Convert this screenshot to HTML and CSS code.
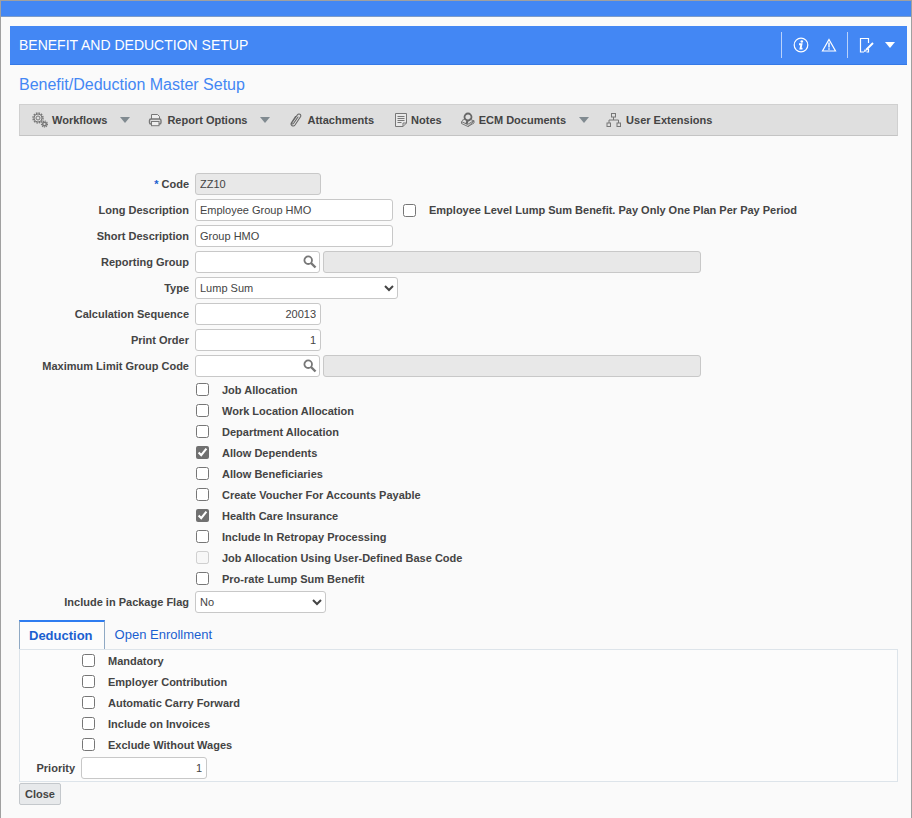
FILE: index.html
```html
<!DOCTYPE html>
<html lang="en">
<head>
    <meta charset="utf-8">
    <title>Benefit and Deduction Setup</title>
    <link rel="stylesheet" href="styles.css">
</head>
<body>
    <div class="top-bar"></div>
    <header class="page-header">
        <h1>BENEFIT AND DEDUCTION SETUP</h1>
        <div class="header-actions">
            <button type="button" class="icon-button" aria-label="Information">
                <svg width="16" height="16" viewBox="0 0 16 16" fill="none" stroke="#fff">
                    <circle cx="8" cy="8" r="6.8" stroke-width="1.2"/>
                    <circle cx="8.8" cy="4.5" r="1.3" fill="#fff" stroke="none"/>
                    <path d="M6 7.2h2.500l-1 4.400h2" stroke-width="1.900"/>
                </svg>
            </button>
            <button type="button" class="icon-button" aria-label="Warnings">
                <svg width="16" height="16" viewBox="0 0 16 16" fill="none" stroke="#fff">
                    <path d="M8 2.500L14.500 14H1.500z" stroke-width="1.200"/>
                    <path d="M8 5.500v5M8 11.300v1.500" stroke-width="1.400"/>
                </svg>
            </button>
            <button type="button" class="icon-button edit-button" aria-label="Edit">
                <svg width="16" height="16" viewBox="0 0 16 16" fill="none" stroke="#fff">
                    <path d="M9.500 6V1.500H1.500v13.500H5M9.500 12v3H7.500" stroke-width="1.200"/>
                    <path d="M14 6L7 13" stroke-width="2"/>
                    <path d="M4.800 15l.8-2.800 2 2z" fill="#fff" stroke="none"/>
                </svg>
                <span class="caret"></span>
            </button>
        </div>
    </header>

    <main>
        <h2>Benefit/Deduction Master Setup</h2>
        <nav class="toolbar">
            <button type="button">
                <svg width="16" height="16" viewBox="0 0 16 16" fill="none" stroke="#777">
                    <circle cx="6" cy="6" r="5" stroke-width="1.4" stroke-dasharray="1.6 1"/>
                    <circle cx="6" cy="6" r="4"/>
                    <circle cx="6" cy="6" r="2"/>
                    <circle cx="12.5" cy="12" r="3" stroke-width="1.2" stroke-dasharray="1.2 .8"/>
                    <circle cx="12.5" cy="12" r="1.8" stroke-width="1.4"/>
                </svg>
                Workflows
                <span class="caret"></span>
            </button>
            <button type="button">
                <svg width="16" height="16" viewBox="0 0 16 16" fill="none" stroke="#777">
                    <path d="M4.5 7V2.5h6l2 2V7" fill="#eee"/>
                    <rect x="2.5" y="7" width="11.5" height="5" rx="1.5" stroke-width="1.4"/>
                    <rect x="4.5" y="9.5" width="7.5" height="4.2" fill="#eee"/>
                </svg>
                Report Options
                <span class="caret"></span>
            </button>
            <button type="button">
                <svg width="16" height="16" viewBox="0 0 16 16" fill="none" stroke="#666" stroke-width="1.1" stroke-linecap="round">
                    <path d="M11 5L6.5 11.5c-.8 1.1-2.3.2-1.6-.9L10.3 3c1.5-2.1 4.5-.4 3.2 1.8L8 13c-1.5 2-4.8.5-3.7-2L8.5 4.5"/>
                </svg>
                Attachments
            </button>
            <button type="button">
                <svg width="16" height="16" viewBox="0 0 16 16" fill="none" stroke="#777">
                    <path d="M4.5 1.5h11v9.5l-3.5 3.5h-7.5z" fill="#e8e8e8"/>
                    <path d="M15.5 11H12v3.5M6.5 4.5h7M6.5 6.5h7M6.5 8.5h7M6.5 10.5h4"/>
                </svg>
                Notes
            </button>
            <button type="button">
                <svg width="16" height="16" viewBox="0 0 16 16" fill="none" stroke="#777">
                    <path d="M3 8.5l3-1.5M10.5 7L15 9l-6 5.5L2.5 11.5v-2l6 3L15 8.5v2.5l-6 3.5"/>
                    <circle cx="9" cy="5" r="3.5" stroke="#666" stroke-width="1.8"/>
                    <path d="M8.5 8.5L7.5 12" stroke="#666" stroke-width="2.2"/>
                </svg>
                ECM Documents
                <span class="caret"></span>
            </button>
            <button type="button">
                <svg width="16" height="16" viewBox="0 0 16 16" fill="none" stroke="#777">
                    <rect x="5.5" y="1.5" width="4" height="3.5"/>
                    <path d="M7.5 5v3M3 11V8h9.5v3"/>
                    <rect x="1" y="11" width="3.5" height="3.5"/>
                    <rect x="11" y="11" width="3.5" height="3.5"/>
                </svg>
                User Extensions
            </button>
        </nav>

        <form class="setup-form">
            <div class="row">
                <label for="code"><span class="required">*</span> Code</label>
                <input type="text" id="code" class="short" value="ZZ10" readonly>
            </div>
            <div class="row">
                <label for="longDesc">Long Description</label>
                <input type="text" id="longDesc" class="medium" value="Employee Group HMO">
                <div class="check">
                    <input type="checkbox" id="lumpSum">
                    <label for="lumpSum">Employee Level Lump Sum Benefit. Pay Only One Plan Per Pay Period</label>
                </div>
            </div>
            <div class="row">
                <label for="shortDesc">Short Description</label>
                <input type="text" id="shortDesc" class="medium" value="Group HMO">
            </div>
            <div class="row">
                <label for="reportGroup">Reporting Group</label>
                <div class="lookup">
                    <input type="text" id="reportGroup">
                    <button type="button" aria-label="Search reporting group">
                        <svg width="14" height="14" viewBox="0 0 14 14" fill="none" stroke="#777">
                            <circle cx="5.2" cy="5.2" r="3.8" stroke-width="1.8"/>
                            <path d="M8 8L12.500 12.500" stroke-width="2.400"/>
                        </svg>
                    </button>
                </div>
                <input type="text" class="description" aria-label="Reporting group description" readonly>
            </div>
            <div class="row">
                <label for="type">Type</label>
                <select id="type" class="type-select">
                    <option>Lump Sum</option>
                </select>
            </div>
            <div class="row">
                <label for="calcSequence">Calculation Sequence</label>
                <input type="text" id="calcSequence" class="short number" value="20013">
            </div>
            <div class="row">
                <label for="printOrder">Print Order</label>
                <input type="text" id="printOrder" class="short number" value="1">
            </div>
            <div class="row">
                <label for="limitGroup">Maximum Limit Group Code</label>
                <div class="lookup">
                    <input type="text" id="limitGroup">
                    <button type="button" aria-label="Search limit group">
                        <svg width="14" height="14" viewBox="0 0 14 14" fill="none" stroke="#777">
                            <circle cx="5.2" cy="5.2" r="3.8" stroke-width="1.8"/>
                            <path d="M8 8L12.500 12.500" stroke-width="2.400"/>
                        </svg>
                    </button>
                </div>
                <input type="text" class="description" aria-label="Limit group description" readonly>
            </div>

            <div class="check-list">
                <div class="check">
                    <input type="checkbox" id="jobAlloc">
                    <label for="jobAlloc">Job Allocation</label>
                </div>
                <div class="check">
                    <input type="checkbox" id="workAlloc">
                    <label for="workAlloc">Work Location Allocation</label>
                </div>
                <div class="check">
                    <input type="checkbox" id="deptAlloc">
                    <label for="deptAlloc">Department Allocation</label>
                </div>
                <div class="check">
                    <input type="checkbox" id="dependents" checked>
                    <label for="dependents">Allow Dependents</label>
                </div>
                <div class="check">
                    <input type="checkbox" id="beneficiaries">
                    <label for="beneficiaries">Allow Beneficiaries</label>
                </div>
                <div class="check">
                    <input type="checkbox" id="voucher">
                    <label for="voucher">Create Voucher For Accounts Payable</label>
                </div>
                <div class="check">
                    <input type="checkbox" id="healthCare" checked>
                    <label for="healthCare">Health Care Insurance</label>
                </div>
                <div class="check">
                    <input type="checkbox" id="retropay">
                    <label for="retropay">Include In Retropay Processing</label>
                </div>
                <div class="check">
                    <input type="checkbox" id="baseCode" disabled>
                    <label for="baseCode">Job Allocation Using User-Defined Base Code</label>
                </div>
                <div class="check">
                    <input type="checkbox" id="prorate">
                    <label for="prorate">Pro-rate Lump Sum Benefit</label>
                </div>
            </div>

            <div class="row">
                <label for="packageFlag">Include in Package Flag</label>
                <select id="packageFlag" class="package-select">
                    <option>No</option>
                </select>
            </div>

            <div class="tabs">
                <a href="#deduction" class="tab active">Deduction</a>
                <a href="#enrollment" class="tab">Open Enrollment</a>
            </div>
            <section class="tab-panel" id="deduction">
                <div class="check-list">
                    <div class="check">
                        <input type="checkbox" id="mandatory">
                        <label for="mandatory">Mandatory</label>
                    </div>
                    <div class="check">
                        <input type="checkbox" id="employer">
                        <label for="employer">Employer Contribution</label>
                    </div>
                    <div class="check">
                        <input type="checkbox" id="carryForward">
                        <label for="carryForward">Automatic Carry Forward</label>
                    </div>
                    <div class="check">
                        <input type="checkbox" id="invoices">
                        <label for="invoices">Include on Invoices</label>
                    </div>
                    <div class="check">
                        <input type="checkbox" id="withoutWages">
                        <label for="withoutWages">Exclude Without Wages</label>
                    </div>
                </div>
                <div class="row">
                    <label for="priority">Priority</label>
                    <input type="text" id="priority" class="short number" value="1">
                </div>
            </section>
            <button type="button" class="close-button">Close</button>
        </form>
    </main>
</body>
</html>
```

FILE: styles.css
```css
* {
    box-sizing: border-box;
}
body {
    margin: 0;
    min-height: 100vh;
    border: 1px solid #a0a0a0;
    background-color: #fafafa;
    font-family: "Liberation Sans", Arial, sans-serif;
    font-size: 11px;
    color: #444;
}
button, input, select {
    font-family: inherit;
    font-size: inherit;
    color: inherit;
}
.top-bar {
    height: 16px;
    background-color: #4387f4;
    border-bottom: 1px solid #7d9cc9;
}
.page-header {
    display: flex;
    justify-content: space-between;
    align-items: center;
    height: 39px;
    margin: 9px 4px 0 9px;
    padding: 0 9px;
    background-color: #4387f4;
    border-bottom: 1px solid #3579e6;
    color: #fff;
}
h1 {
    margin: 0;
    font-size: 14px;
    font-weight: normal;
}
.header-actions {
    display: flex;
    align-items: center;
}
.icon-button {
    display: flex;
    align-items: center;
    padding: 0;
    margin-right: 12px;
    border: none;
    background: none;
}
.icon-button:first-child, .edit-button {
    height: 26px;
    padding-left: 11px;
    border-left: 1px solid #b9d2fb;
}
.edit-button {
    gap: 10px;
    margin: 0 3px 0 -2px;
}
.caret {
    border: 5px solid transparent;
    border-top: 6px solid #808a90;
    border-bottom: none;
}
.edit-button .caret {
    border-top-color: #fff;
}
main {
    padding: 0 13px 13px 18px;
}
h2 {
    margin: 0;
    font-size: 16px;
    font-weight: normal;
    line-height: 39px;
    color: #4387f4;
}
.toolbar {
    display: flex;
    align-items: center;
    gap: 17px;
    height: 32px;
    padding-left: 12px;
    background-color: #dfdfdf;
    border: 1px solid #d0d0d0;
    border-bottom-color: #c4c4c4;
}
.toolbar button {
    display: flex;
    align-items: center;
    gap: 4px;
    padding: 0;
    border: none;
    background: none;
    font-weight: bold;
    white-space: nowrap;
}
.toolbar .caret {
    margin-left: 9px;
}
.setup-form {
    --label-width: 170px;
    margin-top: 35px;
}
.row {
    display: flex;
    align-items: center;
    height: 26px;
}
.row > label {
    width: var(--label-width);
    margin-right: 6px;
    text-align: right;
}
label {
    font-weight: bold;
    white-space: nowrap;
}
.required {
    color: #1a5fd0;
}
input[type="text"], select {
    height: 22px;
    padding: 0 4px;
    border: 1px solid #c8c8c8;
    border-radius: 3px;
    background-color: #fff;
}
input[type="text"]:read-only {
    background-color: #e8e8e8;
}
select {
    padding: 0;
}
.short {
    width: 126px;
}
.medium {
    width: 198px;
}
.number {
    text-align: right;
}
.type-select {
    width: 203px;
}
.package-select {
    width: 131px;
}
.lookup {
    position: relative;
    width: 125px;
    margin-right: 3px;
}
.lookup input {
    display: block;
    width: 100%;
    padding-right: 20px;
}
.lookup button {
    position: absolute;
    top: 4px;
    right: 3px;
    height: 14px;
    padding: 0;
    border: none;
    background: none;
}
.lookup svg {
    display: block;
}
.description {
    width: 378px;
}
.check {
    display: flex;
    align-items: center;
    gap: 13px;
    height: 21px;
}
.row .check {
    margin-left: 10px;
}
.check-list {
    margin-left: calc(var(--label-width) + 7px);
}
input[type="checkbox"] {
    width: 13px;
    height: 13px;
    margin: 0;
    accent-color: #707070;
}
.tabs {
    display: flex;
    margin-top: 5px;
}
.tab {
    height: 29px;
    padding: 0 10px;
    font-size: 13px;
    line-height: 30px;
    color: #1a5fd0;
    text-decoration: none;
}
.tab.active {
    padding: 0 11px 0 9px;
    border: 1px solid #8fa9c4;
    border-top: 2px solid #2f7cf0;
    border-bottom: none;
    background-color: #fcfcfc;
    font-weight: bold;
    line-height: 28px;
}
.tab-panel {
    --label-width: 55px;
    border: 1px solid #dde4ea;
    background-color: #fcfcfc;
}
.close-button {
    display: block;
    height: 22px;
    margin-top: 1px;
    padding: 0 5px;
    border: 1px solid #c4c8cc;
    border-radius: 2px;
    background-color: #e7e9eb;
    font-weight: bold;
}
```
